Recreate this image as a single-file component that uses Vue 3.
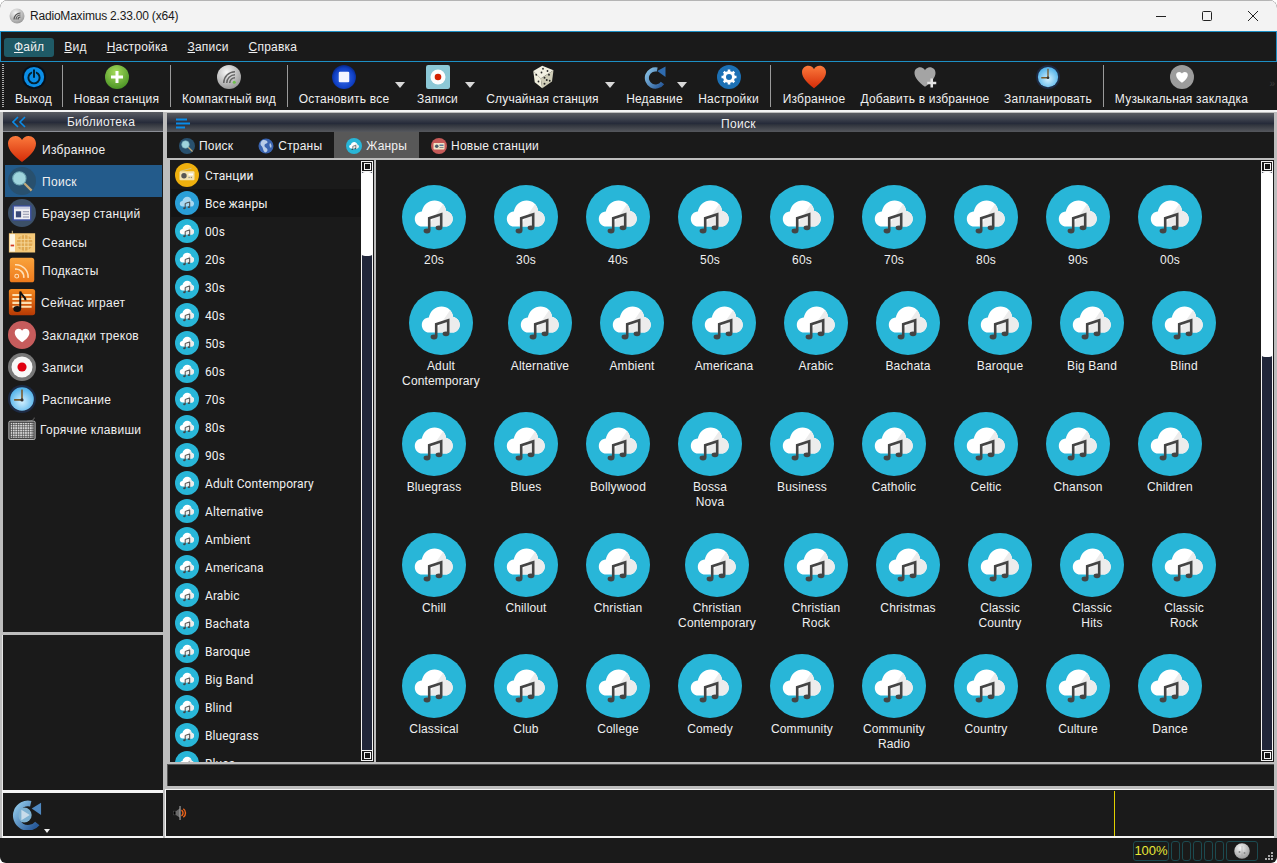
<script setup>
const menu = [
  { key: 'Ф', rest: 'айл', active: true },
  { key: 'В', rest: 'ид' },
  { key: 'Н', rest: 'астройка' },
  { key: 'З', rest: 'аписи' },
  { key: 'С', rest: 'правка' }
]

// box widths follow the gaps of the original toolbar, arrow = offset of the dropdown mark
const tools = [
  { icon: 'i-power', label: 'Выход', w: 57 },
  { sep: true },
  { icon: 'i-plus', label: 'Новая станция', w: 107 },
  { sep: true },
  { icon: 'i-compact', label: 'Компактный вид', w: 116 },
  { sep: true },
  { icon: 'i-stop', label: 'Остановить все', w: 112, arrow: 107 },
  { icon: 'i-rec', label: 'Записи', w: 75, arrow: 65 },
  { icon: 'i-dice', label: 'Случайная станция', w: 135, arrow: 130 },
  { icon: 'i-refresh', label: 'Недавние', w: 89, arrow: 67 },
  { icon: 'i-gear', label: 'Настройки', w: 59, mr: 12 },
  { sep: true },
  { icon: 'i-heart', label: 'Избранное', w: 86 },
  { icon: 'i-heartadd', label: 'Добавить в избранное', w: 136 },
  { icon: 'i-clock', label: 'Запланировать', w: 110 },
  { sep: true },
  { icon: 'i-bookmark', label: 'Музыкальная закладка', w: 155 }
]

const library = [
  { icon: 'i-heart', label: 'Избранное', h: 32, gap: 6 },
  { icon: 'i-search', label: 'Поиск', h: 32, gap: 6, active: true },
  { icon: 'i-browser', label: 'Браузер станций', h: 32, gap: 6 },
  { icon: 'i-sessions', label: 'Сеансы', h: 26, gap: 6 },
  { icon: 'i-rss', label: 'Подкасты', h: 30, gap: 6 },
  { icon: 'i-playing', label: 'Сейчас играет', h: 34, gap: 5 },
  { icon: 'i-bookmark-red', label: 'Закладки треков', h: 32, gap: 6 },
  { icon: 'i-record', label: 'Записи', h: 32, gap: 6 },
  { icon: 'i-clock', label: 'Расписание', h: 32, gap: 6 },
  { icon: 'i-keyboard', label: 'Горячие клавиши', h: 28, gap: 4 }
]

const tabs = [
  { icon: 'i-search', label: 'Поиск' },
  { icon: 'i-globe', label: 'Страны' },
  { icon: 'i-genre', label: 'Жанры', active: true },
  { icon: 'i-newst', label: 'Новые станции' }
]

const listRows = [
  { icon: 'i-station', label: 'Станции' },
  { icon: 'i-allgenres', label: 'Все жанры', hover: true },
  ...['00s', '20s', '30s', '40s', '50s', '60s', '70s', '80s', '90s', 'Adult Contemporary', 'Alternative',
    'Ambient', 'Americana', 'Arabic', 'Bachata', 'Baroque', 'Big Band', 'Blind', 'Bluegrass', 'Blues']
    .map((label) => ({ icon: 'i-genre', label }))
]

const genres = [
  '20s', '30s', '40s', '50s', '60s', '70s', '80s', '90s', '00s',
  'Adult\nContemporary', 'Alternative', 'Ambient', 'Americana', 'Arabic', 'Bachata', 'Baroque', 'Big Band', 'Blind',
  'Bluegrass', 'Blues', 'Bollywood', 'Bossa\nNova', 'Business', 'Catholic', 'Celtic', 'Chanson', 'Children',
  'Chill', 'Chillout', 'Christian', 'Christian\nContemporary', 'Christian\nRock', 'Christmas', 'Classic\nCountry', 'Classic\nHits', 'Classic\nRock',
  'Classical', 'Club', 'College', 'Comedy', 'Community', 'Community\nRadio', 'Country', 'Culture', 'Dance'
]

const isWide = (name) => name.endsWith('Contemporary')
</script>

<template>
  <div class="window">
    <!-- icon sprite -->
    <svg class="sprite" width="0" height="0" aria-hidden="true">
      <defs>
        <linearGradient id="g-heart" x1="0" y1="0" x2="0" y2="1">
          <stop offset="0" stop-color="#fb7a3c" />
          <stop offset="1" stop-color="#d52c08" />
        </linearGradient>
        <radialGradient id="g-green" cx=".45" cy=".3" r=".8">
          <stop offset="0" stop-color="#a6dc5c" />
          <stop offset="1" stop-color="#3f8a1e" />
        </radialGradient>
        <radialGradient id="g-silver" cx=".4" cy=".3" r=".8">
          <stop offset="0" stop-color="#f6f6f6" />
          <stop offset="1" stop-color="#8f8f8f" />
        </radialGradient>
        <radialGradient id="g-stop" cx=".5" cy=".55" r=".6">
          <stop offset="0" stop-color="#3a70ee" />
          <stop offset=".7" stop-color="#0f3fc4" />
          <stop offset="1" stop-color="#041c66" />
        </radialGradient>
        <linearGradient id="g-blue" gradientUnits="userSpaceOnUse" x1="3" y1="8" x2="26" y2="26">
          <stop offset="0" stop-color="#8cc4e6" />
          <stop offset="1" stop-color="#2a5c9c" />
        </linearGradient>
        <radialGradient id="g-clock" cx=".5" cy=".6" r=".6">
          <stop offset="0" stop-color="#d4f1ff" />
          <stop offset="1" stop-color="#4aaee8" />
        </radialGradient>
        <linearGradient id="g-rss" x1="0" y1="0" x2="0" y2="1">
          <stop offset="0" stop-color="#f9a33c" />
          <stop offset="1" stop-color="#ee7a1c" />
        </linearGradient>
        <linearGradient id="g-play" x1="0" y1="0" x2="0" y2="1">
          <stop offset="0" stop-color="#f48a20" />
          <stop offset="1" stop-color="#b83a04" />
        </linearGradient>
        <path id="p-heart" d="M16 29C8 23 2 17 2 10.5 2 6 5.5 3 9.5 3 12.5 3 15 4.8 16 7 17 4.8 19.5 3 22.5 3 26.5 3 30 6 30 10.5 30 17 24 23 16 29Z" />
        <path id="p-cloud" d="M10.2 20.8C7.9 20.8 6.4 19 6.4 17 6.4 15 7.9 13.4 9.9 13.3 10.6 10 13.2 7.8 16.3 7.8 19.3 7.8 21.6 9.8 22.1 13 24 13.3 25.4 14.9 25.4 16.9 25.4 19 23.8 20.8 21.6 20.8Z" />
        <g id="p-note">
          <path d="M13.6 22.8V16.6L19.6 14.6V21" fill="none" stroke="#444" stroke-width="1.3" />
          <ellipse cx="12.5" cy="23" rx="1.7" ry="1.2" fill="#444" />
          <ellipse cx="18.5" cy="21.4" rx="1.7" ry="1.2" fill="#444" />
        </g>
        <clipPath id="c-shade"><path d="M23 6 12 22H30V6Z" /></clipPath>
      </defs>
      <symbol id="i-genre" viewBox="0 0 32 32">
        <circle cx="16" cy="16" r="16" fill="#28b6d8" />
        <use href="#p-cloud" fill="#fff" />
        <use href="#p-cloud" fill="#ececec" clip-path="url(#c-shade)" />
        <use href="#p-note" />
      </symbol>
      <symbol id="i-allgenres" viewBox="0 0 32 32">
        <circle cx="16" cy="16" r="16" fill="#2a9fd8" />
        <use href="#p-cloud" fill="#a8d8f2" />
        <use href="#p-note" />
      </symbol>
      <symbol id="i-station" viewBox="0 0 32 32">
        <circle cx="16" cy="16" r="16" fill="#eeb00e" />
        <path d="M7 11 22 7" stroke="#c8c8a8" stroke-width="1" />
        <rect x="6" y="11" width="20" height="12" rx="1.5" fill="#f2e2b0" />
        <circle cx="12" cy="17" r="3.6" fill="#555" />
        <rect x="18" y="14" width="6" height="2.6" fill="#fff" />
        <rect x="18" y="18.5" width="1.6" height="1.6" fill="#888" /><rect x="21" y="18.5" width="1.6" height="1.6" fill="#888" />
      </symbol>
      <symbol id="i-newst" viewBox="0 0 32 32">
        <circle cx="16" cy="16" r="16" fill="#c65a58" />
        <rect x="5" y="10" width="22" height="13" rx="1.5" fill="#f0e4c8" />
        <circle cx="11.5" cy="16.5" r="3.6" fill="#4a5a6a" />
        <rect x="17" y="13" width="8" height="3" fill="#5a7a9a" />
        <rect x="17" y="18" width="8" height="2" fill="#888" />
      </symbol>
      <symbol id="i-power" viewBox="0 0 32 32">
        <circle cx="16" cy="16" r="16" fill="#05101c" />
        <circle cx="16" cy="16" r="13.5" fill="#0a8ee8" />
        <circle cx="16" cy="17" r="7.5" fill="none" stroke="#04202f" stroke-width="2.6" />
        <path d="M16 6V17" stroke="#0a8ee8" stroke-width="5" />
        <path d="M16 6V17" stroke="#04202f" stroke-width="2.6" />
      </symbol>
      <symbol id="i-plus" viewBox="0 0 32 32">
        <circle cx="16" cy="16" r="16" fill="url(#g-green)" />
        <path d="M16 8V24M8 16H24" stroke="#fff" stroke-width="4" />
      </symbol>
      <symbol id="i-compact" viewBox="0 0 32 32">
        <circle cx="16" cy="16" r="16" fill="url(#g-silver)" />
        <path d="M9 24A15 15 0 0 1 24 9M13 24A11 11 0 0 1 24 13M17 24A7 7 0 0 1 24 17" fill="none" stroke="#666" stroke-width="2" />
        <circle cx="23" cy="23" r="2" fill="#6cc04a" />
      </symbol>
      <symbol id="i-stop" viewBox="0 0 32 32">
        <circle cx="16" cy="16" r="16" fill="url(#g-stop)" />
        <rect x="9" y="9" width="14" height="14" rx="1.5" fill="#f4f6ff" />
      </symbol>
      <symbol id="i-rec" viewBox="0 0 32 32">
        <rect x="0" y="0" width="32" height="32" rx="3" fill="#8cc8d6" />
        <circle cx="16" cy="16" r="10" fill="#fdfdfd" />
        <circle cx="16" cy="16" r="4.4" fill="#d42000" />
      </symbol>
      <symbol id="i-dice" viewBox="0 0 32 32">
        <path d="M15 1 3 8 13 18 30 7Z" fill="#f2f0e2" />
        <path d="M3 8 5 23 15 31 13 18Z" fill="#f0eedc" />
        <path d="M13 18 15 31 28 22 30 7Z" fill="#cfcdb8" />
        <g fill="#2a2a2a">
          <circle cx="16" cy="5" r="1.2" /><circle cx="22" cy="8" r="1.2" /><circle cx="14" cy="10" r="1.2" />
          <circle cx="7" cy="13" r="1.2" /><circle cx="10" cy="22" r="1.2" />
          <circle cx="18" cy="17" r="1.3" /><circle cx="24" cy="13" r="1.3" /><circle cx="21" cy="20" r="1.3" /><circle cx="25" cy="21" r="1.2" /><circle cx="18" cy="25" r="1.3" />
        </g>
      </symbol>
      <symbol id="i-refresh" viewBox="0 0 32 32">
        <path d="M26 24A11.5 11.5 0 1 1 19 6" fill="none" stroke="url(#g-blue)" stroke-width="5.5" />
        <path d="M30 2V16L19 8Z" fill="#2f6cb0" />
      </symbol>
      <symbol id="i-gear" viewBox="0 0 32 32">
        <circle cx="16" cy="16" r="16" fill="#1c70b4" />
        <circle cx="16" cy="16" r="6" fill="none" stroke="#fff" stroke-width="4" />
        <path d="M16 6V10M16 22V26M6 16H10M22 16H26M9 9 12 12M20 20 23 23M23 9 20 12M12 20 9 23" stroke="#fff" stroke-width="3.4" />
      </symbol>
      <symbol id="i-heart" viewBox="2 3 28 26">
        <use href="#p-heart" fill="url(#g-heart)" />
      </symbol>
      <symbol id="i-heartadd" viewBox="0 0 32 32">
        <use href="#p-heart" fill="#a4a4a4" />
        <path d="M25 18V30M19 24H31" stroke="#e2e2e2" stroke-width="3.4" />
      </symbol>
      <symbol id="i-clock" viewBox="0 0 32 32">
        <circle cx="16" cy="16" r="16" fill="#1d2a44" />
        <circle cx="16" cy="16" r="13.5" fill="url(#g-clock)" />
        <path d="M16 5V17H7" fill="none" stroke="#7a5a2a" stroke-width="1.8" />
        <circle cx="16" cy="17" r="1.8" fill="#333" />
      </symbol>
      <symbol id="i-bookmark" viewBox="0 0 32 32">
        <circle cx="16" cy="16" r="16" fill="#9c9c9c" />
        <use href="#p-heart" fill="#fff" transform="translate(7 7.5) scale(.56)" />
      </symbol>
      <symbol id="i-bookmark-red" viewBox="0 0 32 32">
        <circle cx="16" cy="16" r="16" fill="#c65c5c" />
        <use href="#p-heart" fill="#fff" transform="translate(6.5 7) scale(.6)" />
      </symbol>
      <symbol id="i-search" viewBox="0 0 32 32">
        <circle cx="16" cy="16" r="16" fill="#28506e" />
        <path d="M18 18 27 27" stroke="#c2a878" stroke-width="2.6" />
        <circle cx="13" cy="13" r="7.6" fill="#9fd4dc" stroke="#70a8b4" stroke-width="1.2" />
      </symbol>
      <symbol id="i-browser" viewBox="0 0 32 32">
        <circle cx="16" cy="16" r="16" fill="#3c5068" />
        <rect x="6" y="8" width="20" height="16" fill="#f0f0f4" stroke="#3b4fa0" stroke-width="1.6" />
        <rect x="7" y="9" width="18" height="2.6" fill="#c8cce0" />
        <rect x="9" y="14" width="6" height="7" fill="#3b4a78" />
        <path d="M17 14.5H24M17 17.5H24M17 20.5H24" stroke="#8a8fa6" stroke-width="1.2" />
      </symbol>
      <symbol id="i-sessions" viewBox="0 0 32 32">
        <path d="M5 7V3" stroke="#b0a070" stroke-width="1.4" />
        <rect x="1" y="6" width="30" height="22" fill="#f4c878" />
        <rect x="2" y="7" width="6" height="20" fill="#fdf6e4" />
        <rect x="3" y="19" width="4" height="2" fill="#d43a20" />
        <circle cx="19" cy="17" r="9" fill="#e0a850" />
        <path d="M10 13H28M10 17H28M10 21H28M15 8V26M19 8V26M23 8V26" stroke="#f6d89a" stroke-width="1" />
      </symbol>
      <symbol id="i-rss" viewBox="0 0 32 32">
        <rect x="2" y="2" width="28" height="28" rx="3" fill="url(#g-rss)" />
        <circle cx="10" cy="23" r="2.2" fill="none" stroke="#ffe0b8" stroke-width="1.2" />
        <path d="M8 15A9 9 0 0 1 18 25M8 10A14 14 0 0 1 23 25" fill="none" stroke="#ffe0b8" stroke-width="1.8" />
      </symbol>
      <symbol id="i-playing" viewBox="0 0 32 32">
        <rect x="1" y="1" width="30" height="30" rx="3" fill="url(#g-play)" />
        <path d="M5 8H27M5 12.5H27M5 17H27M5 21.5H27" stroke="#fde0b0" stroke-width="2.4" />
        <path d="M14 24V4C15 9 20 9 20 14" fill="none" stroke="#111" stroke-width="2.2" />
        <ellipse cx="10.5" cy="24" rx="4.4" ry="3.4" fill="#111" />
      </symbol>
      <symbol id="i-record" viewBox="0 0 32 32">
        <circle cx="16" cy="16" r="16" fill="#787878" />
        <circle cx="16" cy="16" r="12" fill="#f8f8f8" />
        <circle cx="16" cy="16" r="5.2" fill="#e00010" />
      </symbol>
      <symbol id="i-keyboard" viewBox="0 0 32 32">
        <pattern id="pt-keys" width="2.8" height="2.8" patternUnits="userSpaceOnUse">
          <rect width="2.1" height="2.1" fill="#d6d6d6" />
        </pattern>
        <path d="M22 7C26 7 30 6 30 3" fill="none" stroke="#888" stroke-width=".8" />
        <rect x="1" y="7" width="30" height="21" rx="1.5" fill="#444" stroke="#ccc" stroke-width="1" />
        <rect x="3" y="9" width="26" height="17" fill="url(#pt-keys)" />
      </symbol>
      <symbol id="i-globe" viewBox="0 0 32 32">
        <circle cx="16" cy="16" r="15" fill="#3a64b0" />
        <path d="M8 5C13 3 20 5 19 9 18 12 13 11 13 15 13 20 19 19 19 24 19 27 16 29 14 29 9 24 11 19 6 15 4 12 5 8 8 5Z" fill="#b8cce8" />
        <path d="M24 10C27 12 28 17 26 20 23 18 22 13 24 10Z" fill="#b8cce8" />
      </symbol>
      <symbol id="i-replay" viewBox="0 0 32 32">
        <circle cx="13" cy="16" r="8" fill="#7fb2d2" />
        <path d="M27 25A13 13 0 1 1 20 4" fill="none" stroke="url(#g-blue)" stroke-width="6" />
        <path d="M31 3V16L21 9Z" fill="#4f88c0" />
        <path d="M10 10.5V21.5L19 16Z" fill="#c8dcea" />
      </symbol>
      <symbol id="i-speaker" viewBox="0 0 32 32">
        <rect x="1" y="12" width="5" height="8" fill="#000" stroke="#555" stroke-width="1" />
        <path d="M6 12 15 6V26L6 20Z" fill="#6a6a6a" />
        <path d="M15 1V31" stroke="#a4a4a4" stroke-width="2.4" />
        <path d="M18 10A7 7 0 0 1 18 22M22 7A11 11 0 0 1 22 25" fill="none" stroke="#f0641a" stroke-width="3" />
      </symbol>
      <symbol id="i-logo" viewBox="0 0 32 32">
        <circle cx="16" cy="16" r="15" fill="url(#g-silver)" />
        <path d="M10 23A13 13 0 0 1 23 10M14 23A9 9 0 0 1 23 14M18 23A5 5 0 0 1 23 18" fill="none" stroke="#555" stroke-width="2.4" />
      </symbol>
      <symbol id="i-knob" viewBox="0 0 32 32">
        <circle cx="16" cy="16" r="15.5" fill="url(#g-silver)" />
        <path d="M16 6V26" stroke="#999" stroke-width="1" />
        <circle cx="11" cy="18" r="2" fill="#888" /><circle cx="21" cy="20" r="2" fill="#888" />
      </symbol>
    </svg>

    <!-- Title bar -->
    <header class="titlebar">
      <svg class="title-icon"><use href="#i-logo" /></svg>
      <span class="title-text">RadioMaximus 2.33.00 (x64)</span>
      <div class="win-buttons">
        <svg class="win-btn" viewBox="0 0 46 20"><path d="M18 10.5H28" stroke="#222" fill="none" /></svg>
        <svg class="win-btn" viewBox="0 0 46 20"><rect x="18.5" y="5.5" width="9" height="9" rx="1" stroke="#222" fill="none" /></svg>
        <svg class="win-btn" viewBox="0 0 46 20"><path d="M18 5 28 15M28 5 18 15" stroke="#222" fill="none" /></svg>
      </div>
    </header>

    <!-- Menu -->
    <nav class="menubar">
      <span v-for="m in menu" :key="m.key" class="menu-item" :class="{ 'menu-item--active': m.active }"><u>{{ m.key }}</u>{{ m.rest }}</span>
    </nav>

    <!-- Toolbar -->
    <div class="toolbar">
      <div class="grip"></div>
      <template v-for="(t, i) in tools" :key="i">
        <div v-if="t.sep" class="tool-sep"></div>
        <div v-else class="tool" :style="{ width: t.w + 'px', marginRight: (t.mr || 0) + 'px' }">
          <svg class="tool-icon"><use :href="'#' + t.icon" /></svg>
          <span class="tool-label">{{ t.label }}</span>
          <i v-if="t.arrow" class="tool-arrow" :style="{ left: t.arrow + 'px' }"></i>
        </div>
      </template>
      <span class="tool-more">»</span>
    </div>

    <div class="body">
      <!-- Left column -->
      <aside class="left">
        <section class="library">
          <div class="panel-head library-head">
            <svg class="head-chevrons" viewBox="0 0 14 12"><path d="M6 1 1 6 6 11M13 1 8 6 13 11" fill="none" stroke="#0a8ce8" stroke-width="1.6" /></svg>
            <span>Библиотека</span>
          </div>
          <ul class="lib-list">
            <li
              v-for="item in library"
              :key="item.label"
              class="lib-item"
              :class="{ 'lib-item--active': item.active }"
              :style="{ height: item.h + 'px', gap: item.gap + 'px' }"
            >
              <svg class="lib-icon"><use :href="'#' + item.icon" /></svg>
              <span class="lib-text">{{ item.label }}</span>
            </li>
          </ul>
        </section>
        <section class="left-empty"></section>
        <section class="left-player">
          <svg class="replay"><use href="#i-replay" /></svg>
          <i class="replay-arrow"></i>
        </section>
      </aside>

      <!-- Right column -->
      <main class="right">
        <div class="panel-head search-head">
          <svg class="head-lines" viewBox="0 0 14 12"><path d="M0 1.5H11M0 5.5H14M0 9.5H9" stroke="#0a8ce8" stroke-width="2" /></svg>
          <span>Поиск</span>
        </div>
        <div class="tabs">
          <div v-for="tab in tabs" :key="tab.label" class="tab" :class="{ 'tab--active': tab.active }">
            <svg class="tab-icon"><use :href="'#' + tab.icon" /></svg>
            <span>{{ tab.label }}</span>
          </div>
        </div>

        <div class="content">
          <div class="list-pane">
            <ul class="genre-list">
              <li v-for="row in listRows" :key="row.label" class="genre-row" :class="{ 'genre-row--hover': row.hover }">
                <svg class="row-icon"><use :href="'#' + row.icon" /></svg>
                <span class="row-text">{{ row.label }}</span>
              </li>
            </ul>
            <div class="scrollbar">
              <div class="sb-btn"><i></i></div>
              <div class="sb-track"><div class="sb-thumb sb-thumb--list"></div></div>
              <div class="sb-btn"><i></i></div>
            </div>
          </div>
          <div class="grid-pane">
            <div class="genre-grid">
              <div v-for="g in genres" :key="g" class="genre" :class="{ 'genre--wide': isWide(g) }">
                <svg class="genre-icon"><use href="#i-genre" /></svg>
                <span class="genre-label">{{ g }}</span>
              </div>
            </div>
            <div class="scrollbar">
              <div class="sb-btn"><i></i></div>
              <div class="sb-track"><div class="sb-thumb sb-thumb--grid"></div></div>
              <div class="sb-btn"><i></i></div>
            </div>
          </div>
        </div>

        <div class="info-row"></div>
        <div class="player">
          <svg class="speaker"><use href="#i-speaker" /></svg>
          <div class="player-mark"></div>
        </div>
      </main>
    </div>

    <!-- Status bar -->
    <footer class="statusbar">
      <div class="st-box st-zoom">100%</div>
      <div v-for="n in 5" :key="n" class="st-box st-cell"></div>
      <div class="st-box st-knob"><svg class="knob"><use href="#i-knob" /></svg></div>
      <svg class="grip-corner" viewBox="0 0 10 8"><path d="M7 0h2v2H7zM4 3h2v2H4zM7 3h2v2H7zM1 6h2v2H1zM4 6h2v2H4zM7 6h2v2H7z" fill="#aaa" /></svg>
    </footer>
  </div>
</template>

<style>
html, body {
  margin: 0;
  background: #fff;
}
</style>

<style scoped>
.window {
  width: 1277px;
  height: 863px;
  box-sizing: border-box;
  display: flex;
  flex-direction: column;
  position: relative;
  overflow: hidden;
  border-radius: 8px 8px 6px 6px;
  background: #1a1a1a;
  font-family: "Liberation Sans", Arial, sans-serif;
  font-size: 12px;
  color: #f0f0f0;
}

.sprite {
  position: absolute;
}

ul {
  list-style: none;
  margin: 0;
  padding: 0;
}

/* Title bar */
.titlebar {
  height: 31px;
  flex: none;
  box-sizing: border-box;
  border-top: 1px solid #b4b4b4;
  background: #f3f3f3;
  display: flex;
  align-items: center;
  padding-left: 9px;
  color: #1a1a1a;
}

.title-icon {
  width: 16px;
  height: 16px;
}

.title-text {
  margin-left: 5px;
  font-size: 12px;
  letter-spacing: -0.2px;
}

.win-buttons {
  margin-left: auto;
  margin-right: 1px;
  display: flex;
}

.win-btn {
  width: 46px;
  height: 20px;
}

/* Menu */
.menubar {
  height: 31px;
  flex: none;
  box-sizing: border-box;
  border: 1px solid #1d8fc4;
  padding: 6px 0 0 3px;
  display: flex;
  align-items: flex-start;
  background: #1a1a1a;
}

.menu-item {
  height: 19px;
  line-height: 19px;
  padding: 0 10px;
  border-radius: 3px;
  letter-spacing: 0.2px;
}

.menu-item--active {
  background: #1f5a66;
}

/* Toolbar */
.toolbar {
  height: 48px;
  flex: none;
  display: flex;
  align-items: stretch;
  position: relative;
  background: #1a1a1a;
}

.grip {
  width: 3px;
  margin: 2px 0 2px 2px;
  background-image: linear-gradient(#aaa 50%, transparent 50%);
  background-size: 2px 2px;
  background-repeat: repeat-y;
}

.tool {
  flex: none;
  position: relative;
  display: flex;
  flex-direction: column;
  align-items: center;
  padding-top: 3px;
  box-sizing: border-box;
}

.tool-icon {
  width: 24px;
  height: 24px;
}

.tool-label {
  margin-top: 3px;
  line-height: 14px;
  white-space: nowrap;
  letter-spacing: 0.2px;
}

.tool-arrow {
  position: absolute;
  top: 20px;
  width: 0;
  height: 0;
  border-left: 5px solid transparent;
  border-right: 5px solid transparent;
  border-top: 6px solid #d8d8d8;
}

.tool-sep {
  flex: none;
  width: 1px;
  margin: 3px 0;
  background: #9a9a9a;
}

.tool-more {
  position: absolute;
  right: 2px;
  top: 16px;
  color: #3c3c3c;
  font-size: 10px;
}

/* Body */
.body {
  flex: 1;
  min-height: 0;
  display: flex;
  background: #bdbdbd;
  border-top: 2px solid #f4f4f4;
  padding-right: 3px;
}

.left {
  width: 163px;
  flex: none;
  margin-right: 2px;
  display: flex;
  flex-direction: column;
  padding-left: 2px;
  box-sizing: border-box;
}

.library {
  height: 520px;
  flex: none;
  margin-left: 1px;
  background: #1a1a1a;
}

.panel-head {
  height: 19px;
  line-height: 20px;
  position: relative;
  text-align: center;
  letter-spacing: 0.3px;
  background: linear-gradient(#5a5c62 0, #3e424e 30%, #262b3a 55%, #32363f 65%, #56585d 100%);
}

.library-head {
  border-bottom: 1px solid #8b8e96;
  padding-left: 36px;
}

.search-head {
  margin-left: 2px;
  padding-left: 36px;
  line-height: 22px;
}

.head-chevrons {
  position: absolute;
  left: 9px;
  top: 4px;
  width: 14px;
  height: 12px;
}

.lib-item {
  display: flex;
  align-items: center;
  padding-left: 3px;
  letter-spacing: 0.3px;
  margin: 0 1px 0 2px;
}

.lib-item:first-child {
  margin-top: 1px;
}

.lib-item--active {
  background: #235b8b;
}

.lib-icon {
  width: 28px;
  height: 28px;
  flex: none;
}

.lib-text {
  margin-top: 2px;
}

.left-empty {
  height: 155px;
  flex: none;
  margin-top: 3px;
  background: #1a1a1a;
  border-left: 1px solid #e6e6e6;
}

.left-player {
  flex: 1;
  position: relative;
  background: #1a1a1a;
  border-top: 3px solid #f4f4f4;
  border-left: 1px solid #f4f4f4;
  border-bottom: 2px solid #f4f4f4;
  display: flex;
  align-items: center;
  padding-left: 9px;
}

.replay {
  width: 30px;
  height: 30px;
}

.replay-arrow {
  position: absolute;
  left: 41px;
  bottom: 3px;
  width: 0;
  height: 0;
  border-left: 3px solid transparent;
  border-right: 3px solid transparent;
  border-top: 4px solid #f0f0f0;
}

.right {
  flex: 1;
  min-width: 0;
  display: flex;
  flex-direction: column;
  padding-top: 1px;
}

.head-lines {
  position: absolute;
  left: 9px;
  top: 5px;
  width: 14px;
  height: 12px;
}

.tabs {
  height: 26px;
  flex: none;
  margin-left: 2px;
  display: flex;
  background: #1a1a1a;
}

.tab {
  display: flex;
  align-items: center;
  gap: 4px;
  padding: 2px 12px 0;
  letter-spacing: 0.2px;
}

.tab:first-child {
  padding-right: 13px;
}

.tab--active {
  background: #585858;
}

.tab-icon {
  width: 16px;
  height: 16px;
  flex: none;
}

.content {
  height: 602px;
  flex: none;
  margin-top: 2px;
  margin-left: 5px;
  display: flex;
  gap: 2px;
}

.list-pane {
  width: 204px;
  flex: none;
  position: relative;
  display: flex;
  background: #1a1a1a;
  overflow: hidden;
}

.genre-list {
  flex: 1;
  min-width: 0;
  padding: 1px 0 0 1px;
}

.genre-row {
  height: 28px;
  display: flex;
  align-items: center;
  gap: 6px;
  padding-left: 4px;
  font-family: Roboto, "Liberation Sans", sans-serif;
  font-size: 12px;
  letter-spacing: 0.1px;
}

.row-text {
  margin-top: 2px;
}

.genre-row--hover {
  background: #141414;
}

.row-icon {
  width: 24px;
  height: 24px;
  flex: none;
}

.scrollbar {
  width: 12px;
  flex: none;
  display: flex;
  flex-direction: column;
  margin: 1px 1px 1px 0;
}

.sb-btn {
  height: 11px;
  flex: none;
  box-sizing: border-box;
  border: 1px solid #f4f4f4;
  background: #1a1a1a;
  display: flex;
  align-items: center;
  justify-content: center;
}

.sb-btn i {
  width: 5px;
  height: 5px;
  border: 1px solid #f4f4f4;
}

.sb-track {
  flex: 1;
  background: #20263a;
  border-left: 1px solid #f4f4f4;
  border-right: 1px solid #f4f4f4;
}

.sb-thumb {
  background: #fff;
  border-radius: 4px;
  margin: 0 -1px;
}

.sb-thumb--list {
  height: 84px;
}

.sb-thumb--grid {
  height: 185px;
}

.grid-pane {
  flex: 1;
  min-width: 0;
  display: flex;
  background: #1a1a1a;
  overflow: hidden;
}

.genre-grid {
  flex: 1;
  min-width: 0;
  box-sizing: border-box;
  padding: 25px 0 0 12px;
  display: flex;
  flex-wrap: wrap;
  align-content: flex-start;
  align-items: flex-start;
}

.genre {
  width: 92px;
  display: flex;
  flex-direction: column;
  align-items: center;
  padding-bottom: 23px;
}

.genre--wide {
  width: 106px;
}

.genre-icon {
  width: 64px;
  height: 64px;
}

.genre-label {
  margin-top: 4px;
  line-height: 15px;
  text-align: center;
  white-space: pre-line;
  letter-spacing: 0.15px;
}

.info-row {
  height: 22px;
  flex: none;
  box-sizing: border-box;
  margin: 2px 0 3px 2px;
  background: #1a1a1a;
  border-top: 1px solid #555;
  border-left: 1px solid #555;
}

.player {
  flex: 1;
  position: relative;
  display: flex;
  align-items: center;
  padding-left: 7px;
  background: #1a1a1a;
  border-top: 1px solid #f4f4f4;
  border-bottom: 2px solid #f4f4f4;
  border-left: 1px solid #f4f4f4;
}

.speaker {
  width: 15px;
  height: 16px;
}

.player-mark {
  position: absolute;
  left: 948px;
  top: 1px;
  bottom: 0;
  width: 1px;
  background: #e0d000;
}

/* Status bar */
.statusbar {
  height: 25px;
  flex: none;
  box-sizing: border-box;
  display: flex;
  align-items: flex-start;
  gap: 2px;
  padding: 3px 0 0 1133px;
  position: relative;
}

.st-box {
  height: 20px;
  box-sizing: border-box;
  border: 1px solid #1c4a50;
  border-radius: 3px;
}

.st-zoom {
  width: 36px;
  line-height: 18px;
  text-align: center;
  font-size: 13px;
  color: #e8e838;
}

.st-cell {
  width: 9px;
}

.st-knob {
  width: 32px;
  display: flex;
  align-items: center;
  justify-content: center;
}

.knob {
  width: 16px;
  height: 16px;
}

.grip-corner {
  position: absolute;
  right: 3px;
  bottom: 3px;
  width: 10px;
  height: 8px;
}
</style>
